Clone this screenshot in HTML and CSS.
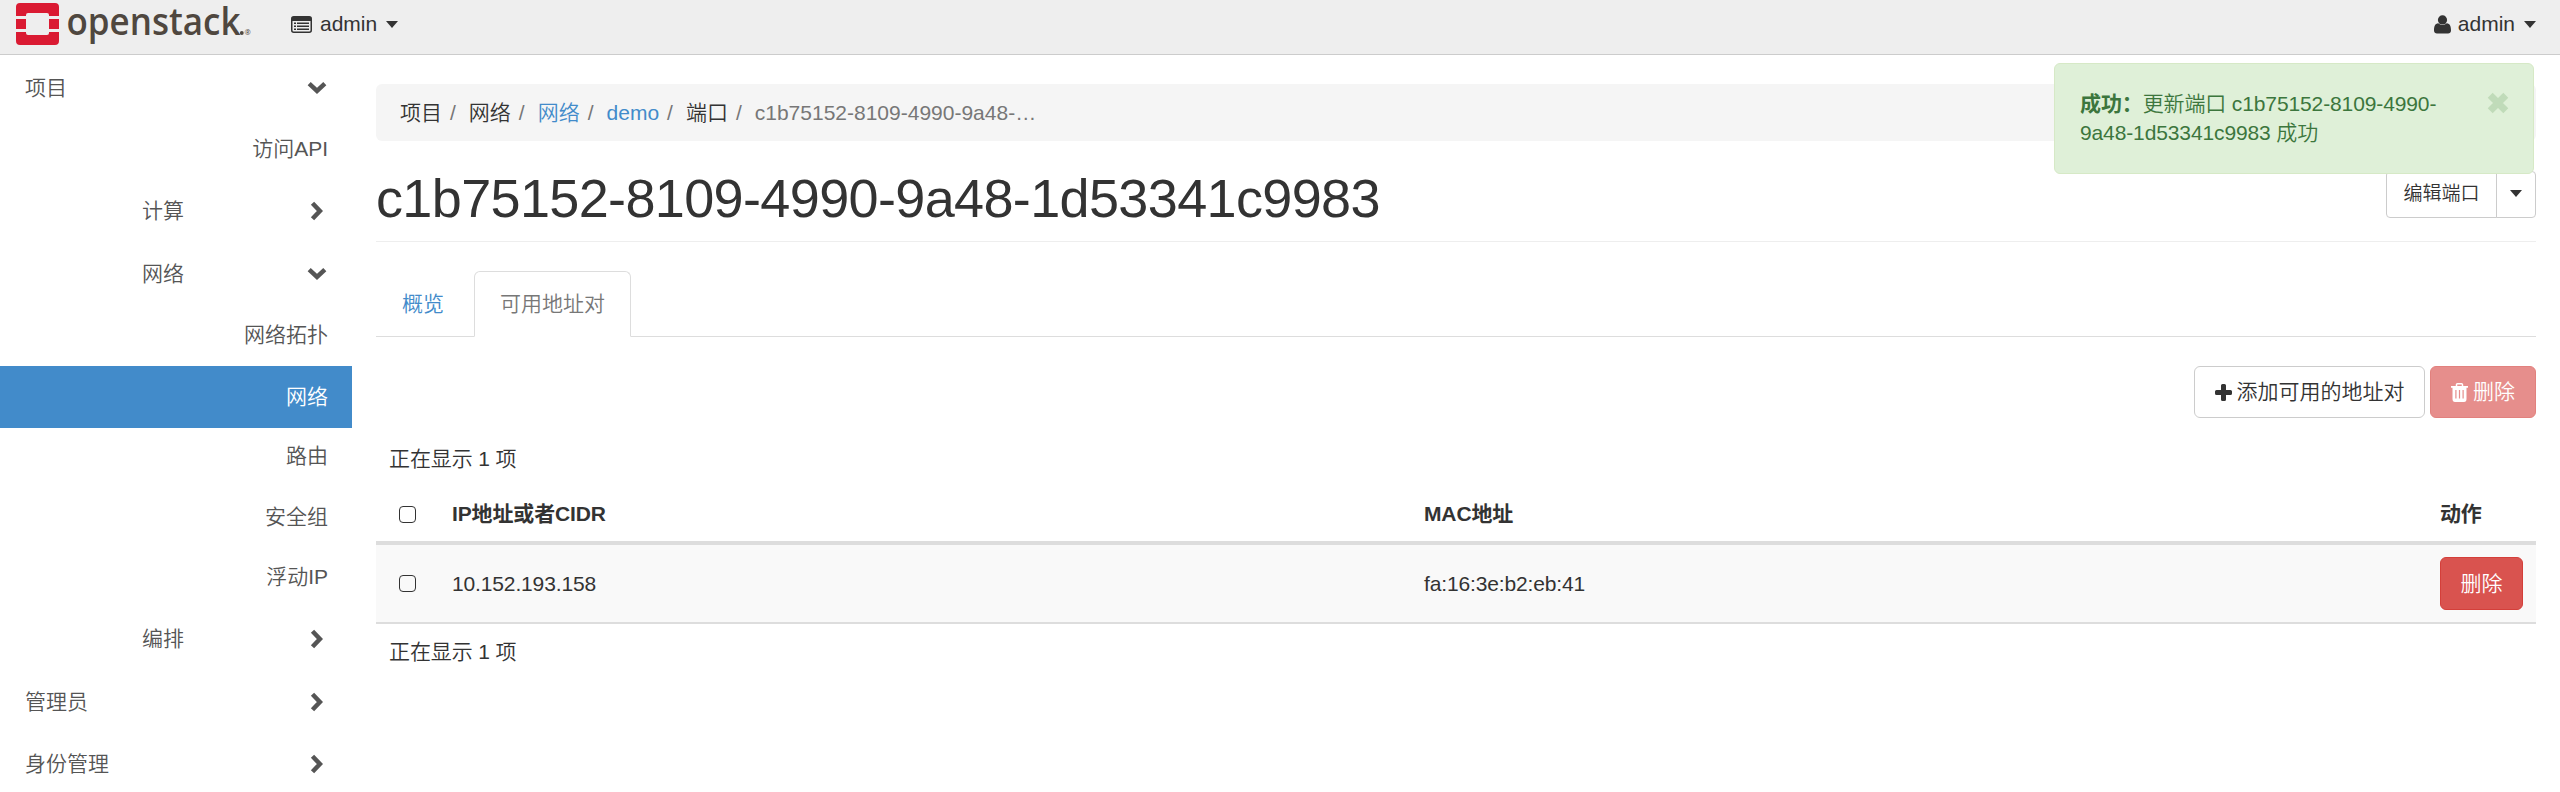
FILE: index.html
```html
<!DOCTYPE html>
<html lang="zh-CN">
<head>
<meta charset="utf-8">
<title>c1b75152-8109-4990-9a48-1d53341c9983</title>
<link rel="stylesheet" href="styles.css">
</head>
<body>
<svg class="defs" width="0" height="0">
  <symbol id="down" viewBox="0 0 20 14"><path d="M2.200 2.700 10 10l7.800-7.300" fill="none" stroke="currentColor" stroke-width="4.500"/></symbol>
  <symbol id="right" viewBox="0 0 14 20"><path d="M2.500 2.200 9.900 10l-7.400 7.800" fill="none" stroke="currentColor" stroke-width="4.500"/></symbol>
  <symbol id="caret" viewBox="0 0 12 7"><path d="M0 0h12L6 7z" fill="currentColor"/></symbol>
</svg>
<header class="topbar">
  <svg class="logo" width="236" height="54" viewBox="0 0 236 54">
    <g fill="#da1a32">
      <path d="M4 3h35a4 4 0 0 1 4 4v9H33v-1a2 2 0 0 0-2-2H12a2 2 0 0 0-2 2v1H0V7a4 4 0 0 1 4-4z"/>
      <path d="M0 19h10v10H0zM33 19h10v10H33z"/>
      <path d="M0 32h10v1a2 2 0 0 0 2 2h19a2 2 0 0 0 2-2v-1h10v9a4 4 0 0 1-4 4H4a4 4 0 0 1-4-4z"/>
    </g>
    <text class="logo-text" x="50.500" y="34.500" textLength="174" lengthAdjust="spacingAndGlyphs">openstack</text>
    <circle cx="225.800" cy="33" r="1.900" fill="#4f473f"/>
    <text class="logo-reg" x="228.500" y="35">®</text>
  </svg>
  <div class="top-item project">
    <svg width="21" height="17" viewBox="0 0 21 17"><rect x=".75" y=".75" width="19.500" height="15.500" rx="2" fill="none" stroke="#333" stroke-width="1.500"/><path d="M1 1h19v4H1z" fill="#333"/><path d="M3 7.200h2M3 10.200h2M3 13.200h2M6 7.200h12M6 10.200h12M6 13.200h12" stroke="#333" stroke-width="1.400"/></svg>
    <span>admin</span><svg class="caret" width="12" height="7"><use href="#caret"/></svg>
  </div>
  <div class="top-item user">
    <svg width="17" height="19" viewBox="0 0 17 19"><circle cx="8.500" cy="4.900" r="4.600" fill="#333"/><path d="M4.200 8.300a6 6 0 0 0 8.600 0C16 8.600 17 11.500 17 15.500c0 2-1.300 3-3 3H3c-1.700 0-3-1-3-3 0-4 1-6.900 4.200-7.200z" fill="#333"/></svg>
    <span>admin</span><svg class="caret" width="12" height="7"><use href="#caret"/></svg>
  </div>
</header>
<div class="layout">
  <nav class="sidebar">
    <div class="node top">项目<svg class="down" width="20" height="14"><use href="#down"/></svg></div>
    <a class="node leaf">访问API</a>
    <div class="node group">计算<svg class="right" width="14" height="20"><use href="#right"/></svg></div>
    <div class="node group">网络<svg class="down" width="20" height="14"><use href="#down"/></svg></div>
    <a class="node leaf">网络拓扑</a>
    <a class="node leaf active">网络</a>
    <a class="node leaf">路由</a>
    <a class="node leaf">安全组</a>
    <a class="node leaf">浮动IP</a>
    <div class="node group">编排<svg class="right" width="14" height="20"><use href="#right"/></svg></div>
    <div class="node top">管理员<svg class="right" width="14" height="20"><use href="#right"/></svg></div>
    <div class="node top">身份管理<svg class="right" width="14" height="20"><use href="#right"/></svg></div>
  </nav>
  <main class="content">
    <ol class="breadcrumb">
      <li>项目</li><li>网络</li><li><a>网络</a></li><li><a>demo</a></li><li>端口</li><li class="current">c1b75152-8109-4990-9a48-…</li>
    </ol>
    <div class="page-header">
      <h1>c1b75152-8109-4990-9a48-1d53341c9983</h1>
      <div class="btn-group"><button class="btn-sm">编辑端口</button><button class="btn-sm toggle"><svg width="12" height="7"><use href="#caret"/></svg></button></div>
    </div>
    <div class="tabs"><a class="tab">概览</a><a class="tab selected">可用地址对</a></div>
    <div class="actions">
      <button class="btn add"><svg width="17" height="17" viewBox="0 0 17 17"><path d="M6 1.500Q6 0 7.500 0h2Q11 0 11 1.500V6h4.500Q17 6 17 7.500v2Q17 11 15.500 11H11v4.500Q11 17 9.500 17h-2Q6 17 6 15.500V11H1.500Q0 11 0 9.500v-2Q0 6 1.500 6H6z" fill="#333"/></svg>添加可用的地址对</button>
      <button class="btn danger disabled"><svg width="17" height="19" viewBox="0 0 17 19"><path d="M5.500 3V1.700Q5.500.8 6.400.8h4.200q.9 0 .9.900V3" fill="none" stroke="#fff" stroke-width="1.500"/><path fill-rule="evenodd" d="M0 3h17v1.800h-1.500V16q0 3-2.500 3H4q-2.500 0-2.500-3V4.800H0zM4.300 7v8.500h1.200V7zM7.900 7v8.500h1.200V7zM11.500 7v8.500h1.200V7z" fill="#fff"/></svg>删除</button>
    </div>
    <div class="count">正在显示 1 项</div>
    <table class="table">
      <thead><tr><th class="check"><span class="box"></span></th><th class="ip">IP地址或者CIDR</th><th class="mac">MAC地址</th><th>动作</th></tr></thead>
      <tbody><tr><td class="check"><span class="box"></span></td><td>10.152.193.158</td><td>fa:16:3e:b2:eb:41</td><td><button class="btn danger">删除</button></td></tr></tbody>
    </table>
    <div class="count foot">正在显示 1 项</div>
  </main>
</div>
<div class="alert">
  <p><strong>成功：</strong>更新端口 c1b75152-8109-4990-<br>9a48-1d53341c9983 成功</p>
  <svg width="22" height="22" viewBox="0 0 22 22"><path d="M3.200 3.200l15.600 15.600M18.800 3.200L3.200 18.800" stroke="#c0dbb9" stroke-width="7"/></svg>
</div>
</body>
</html>
```
FILE: styles.css
```css
* { box-sizing: border-box; }
body {
  margin: 0;
  height: 792px;
  overflow: hidden;
  background: #fff;
  color: #333;
  font: 350 21px/30px "Liberation Sans", "Noto Sans CJK SC", sans-serif;
}
.defs { position: absolute; }
svg { flex: none; display: block; }
button { font: inherit; color: inherit; margin: 0; }
.topbar {
  display: flex;
  height: 55px;
  padding: 0 24px 0 16px;
  background: #eee;
  border-bottom: 1px solid #ccc;
}
.logo { overflow: visible; }
.logo-text { font: 600 38px/1 "Open Sans", sans-serif; fill: #4f473f; }
.logo-reg { font: 7.500px/1 "Open Sans", sans-serif; fill: #4f473f; }
.top-item { display: flex; align-items: center; height: 48px; }
.top-item .caret { margin-left: 9px; }
.project { margin-left: 39px; }
.project span { margin-left: 8px; }
.user { margin-left: auto; }
.user span { margin-left: 7px; }
.layout { display: flex; }
.sidebar { width: 352px; flex: none; padding-top: 1.500px; color: #555; }
.node { display: flex; align-items: center; height: 62.700px; }
.node svg { margin-left: auto; }
.top { padding: 0 25px; }
.group { padding: 0 25px 0 142px; }
.node .down { margin-right: 0; }
.node .right { margin-right: 3px; }
.leaf { justify-content: flex-end; height: 60.500px; padding-right: 24px; }
.active { height: 62px; margin-bottom: -1.500px; background: #428bca; color: #fff; }
.content { flex: 1; padding: 29px 24px 0; }
.breadcrumb {
  display: flex;
  align-items: center;
  height: 57px;
  margin: 0;
  padding: 0 24px;
  border-radius: 6px;
  background: #f5f5f5;
  list-style: none;
}
.breadcrumb li + li::before { content: "/"; padding: 0 13px 0 8px; color: #777; }
.breadcrumb a, .tab { color: #428bca; }
.breadcrumb .current { color: #777; }
.page-header {
  display: flex;
  align-items: flex-start;
  justify-content: space-between;
  height: 101px;
  padding-top: 30px;
  border-bottom: 1px solid #eee;
}
h1 { margin: -3px 0 0; font-size: 54px; line-height: 60px; font-weight: 400; letter-spacing: -.640px; }
.btn-group { display: flex; }
.btn-sm {
  height: 47px;
  width: 111px;
  padding: 0 0 2px;
  border: 1px solid #ccc;
  border-radius: 4px 0 0 4px;
  background: #fff;
  font-size: 19px;
}
.toggle { display: flex; align-items: center; justify-content: center; width: 40px; margin-left: -1px; border-radius: 0 4px 4px 0; }
.tabs { display: flex; height: 66px; margin-top: 29px; border-bottom: 1px solid #ddd; }
.tab { display: flex; align-items: center; width: 98px; padding-left: 26px; }
.selected {
  width: 157px;
  height: 66px;
  padding-left: 25px;
  border: 1px solid #ddd;
  border-bottom-color: #fff;
  border-radius: 6px 6px 0 0;
  color: #777;
}
.actions { display: flex; justify-content: flex-end; gap: 5px; margin-top: 29px; }
.btn {
  display: flex;
  align-items: center;
  justify-content: center;
  gap: 5px;
  height: 52px;
  width: 83px;
  padding: 0;
  border: 1px solid #ccc;
  border-radius: 6px;
  background: #fff;
}
.add { width: 231px; }
.danger { background: #d9534f; border-color: #d43f3a; color: #fff; }
.disabled { width: 106px; opacity: .65; }
.count { padding: 0 13px; margin-top: 26px; letter-spacing: -.120px; }
.table { width: 100%; margin-top: 13px; border-collapse: separate; border-spacing: 0; table-layout: fixed; letter-spacing: -.140px; }
th, td { padding: 0 0 0 12px; text-align: left; }
th { height: 58px; border-bottom: 4px solid #ddd; font-weight: 700; }
td { height: 79px; border-bottom: 2px solid #ddd; background: #f9f9f9; }
td .btn { height: 53px; }
th.check, td.check { width: 64px; padding-left: 23px; }
th.ip { width: 972px; }
th.mac { width: 1016px; }
.box { display: block; width: 17px; height: 17px; border: 1.500px solid #333; border-radius: 4px; }
.foot { margin-top: 13px; }
.alert {
  position: absolute;
  top: 63px;
  right: 26px;
  display: flex;
  justify-content: space-between;
  width: 480px;
  height: 111px;
  padding: 25px 24px 0 25px;
  border: 1px solid #d6e9c6;
  border-radius: 6px;
  background: #dff0d8;
  color: #3c763d;
  line-height: 29px;
  letter-spacing: -.120px;
}
.alert p { margin: 0; }
.alert strong { font-weight: 700; }
.alert svg { margin-top: 3px; }
```
